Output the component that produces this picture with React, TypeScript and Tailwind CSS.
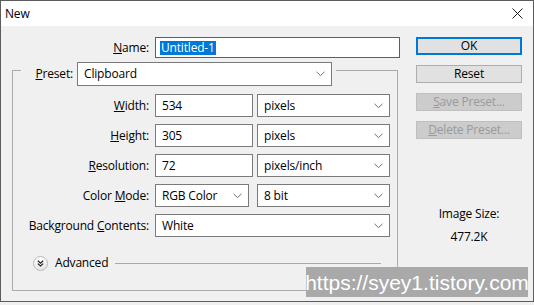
import React from "react"

function Chevron() {
  return (
    <svg width="9" height="6" viewBox="0 0 9 6" className="shrink-0">
      <polyline points="0.5,0.8 4.5,4.6 8.5,0.8" fill="none" stroke="#6f6f6f" strokeWidth="1" />
    </svg>
  )
}

function Select({ value, w, h = "h-[23px]" }: { value: string; w: string; h?: string }) {
  return (
    <div className={`${w} ${h} flex items-center justify-between border border-[#7a7a7a] bg-white pl-[6px] pr-[6px]`}>
      <span>{value}</span>
      <Chevron />
    </div>
  )
}

function Field({ value }: { value: string }) {
  return (
    <div className="flex h-[23px] w-[98px] items-center border border-[#7a7a7a] bg-white pl-[6px]">{value}</div>
  )
}

function Label({ children }: { children: React.ReactNode }) {
  return <div className="w-[142px] shrink-0 pr-[6px] text-right">{children}</div>
}

function Button({ children, variant = "normal" }: { children: React.ReactNode; variant?: "ok" | "normal" | "disabled" }) {
  const cls =
    variant === "ok"
      ? "border-2 border-[#0078d7] bg-[#e1e1e1] text-black"
      : variant === "disabled"
        ? "border border-[#bfbfbf] bg-[#cccccc] text-[#9a9a9a]"
        : "border border-[#adadad] bg-[#e1e1e1] text-black"
  return <div className={`flex h-[18px] w-[106px] items-center justify-center ${cls}`}>{children}</div>
}

export default function App() {
  return (
    <div className="h-[305px] w-[534px] bg-[#f0f0f0] font-['Open_Sans','Noto_Sans',sans-serif] text-[12px] leading-[16px] tracking-[-0.18px] text-black">
      <div className="relative flex h-[302px] w-[534px] flex-col border border-[#5c5c5c] bg-[#f0f0f0]">
        {/* title bar */}
        <div className="flex h-[25px] shrink-0 items-center justify-between bg-white pl-[4px] pr-[10px]">
          <span className="text-[12px]">New</span>
          <svg width="11" height="11" viewBox="0 0 11 11">
            <path d="M0.5 0.5 L10.5 10.5 M10.5 0.5 L0.5 10.5" stroke="#1a1a1a" strokeWidth="1" />
          </svg>
        </div>

        <div className="flex flex-1">
          {/* left side */}
          <div className="w-[399px] shrink-0 pl-[11px]">
            <div className="mt-[11px] flex items-center">
              <div className="w-[143px] shrink-0 pr-[6px] text-right">
                <u>N</u>ame:
              </div>
              <div className="flex h-[21px] w-[245px] items-center border border-[#0078d7] bg-white pl-[4px]">
                <span className="bg-[#0078d7] px-[1px] leading-[14px] text-white">Untitled-1</span>
              </div>
            </div>

            <div className="mt-[12px] h-[221px] w-[386px] border border-[#ababab]">
              {/* preset row sits on the group border like a legend */}
              <div className="relative -mt-[9px] ml-[8px] flex w-fit items-center bg-[#f0f0f0] pr-[4px]">
                <div className="w-[56px] pr-[4px] text-right">
                  <u>P</u>reset:
                </div>
                <Select value="Clipboard" w="w-[255px]" h="h-[24px]" />
              </div>

              <div className="mt-[8px] flex flex-col gap-[7px]">
                <div className="flex items-center">
                  <Label>
                    <u>W</u>idth:
                  </Label>
                  <Field value="534" />
                  <div className="ml-[4px]">
                    <Select value="pixels" w="w-[133px]" />
                  </div>
                </div>
                <div className="flex items-center">
                  <Label>
                    <u>H</u>eight:
                  </Label>
                  <Field value="305" />
                  <div className="ml-[4px]">
                    <Select value="pixels" w="w-[133px]" />
                  </div>
                </div>
                <div className="flex items-center">
                  <Label>
                    <u>R</u>esolution:
                  </Label>
                  <Field value="72" />
                  <div className="ml-[4px]">
                    <Select value="pixels/inch" w="w-[133px]" />
                  </div>
                </div>
                <div className="flex items-center">
                  <Label>
                    Color <u>M</u>ode:
                  </Label>
                  <Select value="RGB Color" w="w-[94px]" />
                  <div className="ml-[8px]">
                    <Select value="8 bit" w="w-[133px]" />
                  </div>
                </div>
                <div className="flex items-center">
                  <Label>
                    Background <u>C</u>ontents:
                  </Label>
                  <Select value="White" w="w-[235px]" />
                </div>
              </div>

              <div className="mt-[18px] flex items-center pl-[20px] pr-[16px]">
                <div className="flex h-[15px] w-[15px] items-center justify-center rounded-full border border-[#b8b8b8] bg-gradient-to-b from-white to-[#e6e6e6]">
                  <svg width="7" height="7" viewBox="0 0 7 7">
                    <polyline points="0.8,0.8 3.5,3.2 6.2,0.8" fill="none" stroke="#222" strokeWidth="1.2" />
                    <polyline points="0.8,3.6 3.5,6 6.2,3.6" fill="none" stroke="#222" strokeWidth="1.2" />
                  </svg>
                </div>
                <span className="ml-[7px]">Advanced</span>
                <div className="ml-[7px] h-px flex-1 bg-[#a8a8a8]" />
              </div>
            </div>
          </div>

          {/* right side */}
          <div className="ml-[16px] mt-[11px] flex w-[106px] flex-col items-center">
            <div className="flex flex-col gap-[10px]">
              <Button variant="ok">OK</Button>
              <Button>Reset</Button>
              <Button variant="disabled">
                <span>
                  <u>S</u>ave Preset...
                </span>
              </Button>
              <Button variant="disabled">
                <span>
                  <u>D</u>elete Preset...
                </span>
              </Button>
            </div>
            <div className="mt-[67px]">Image Size:</div>
            <div className="mt-[7px]">477.2K</div>
          </div>
        </div>

        <div className="absolute left-[305px] top-[266px] flex h-[30px] w-[222px] items-center justify-center bg-[#a9a9a9] font-['Liberation_Sans',sans-serif] text-[21px] leading-none tracking-normal text-white">
          https://syey1.tistory.com
        </div>
      </div>
    </div>
  )
}
